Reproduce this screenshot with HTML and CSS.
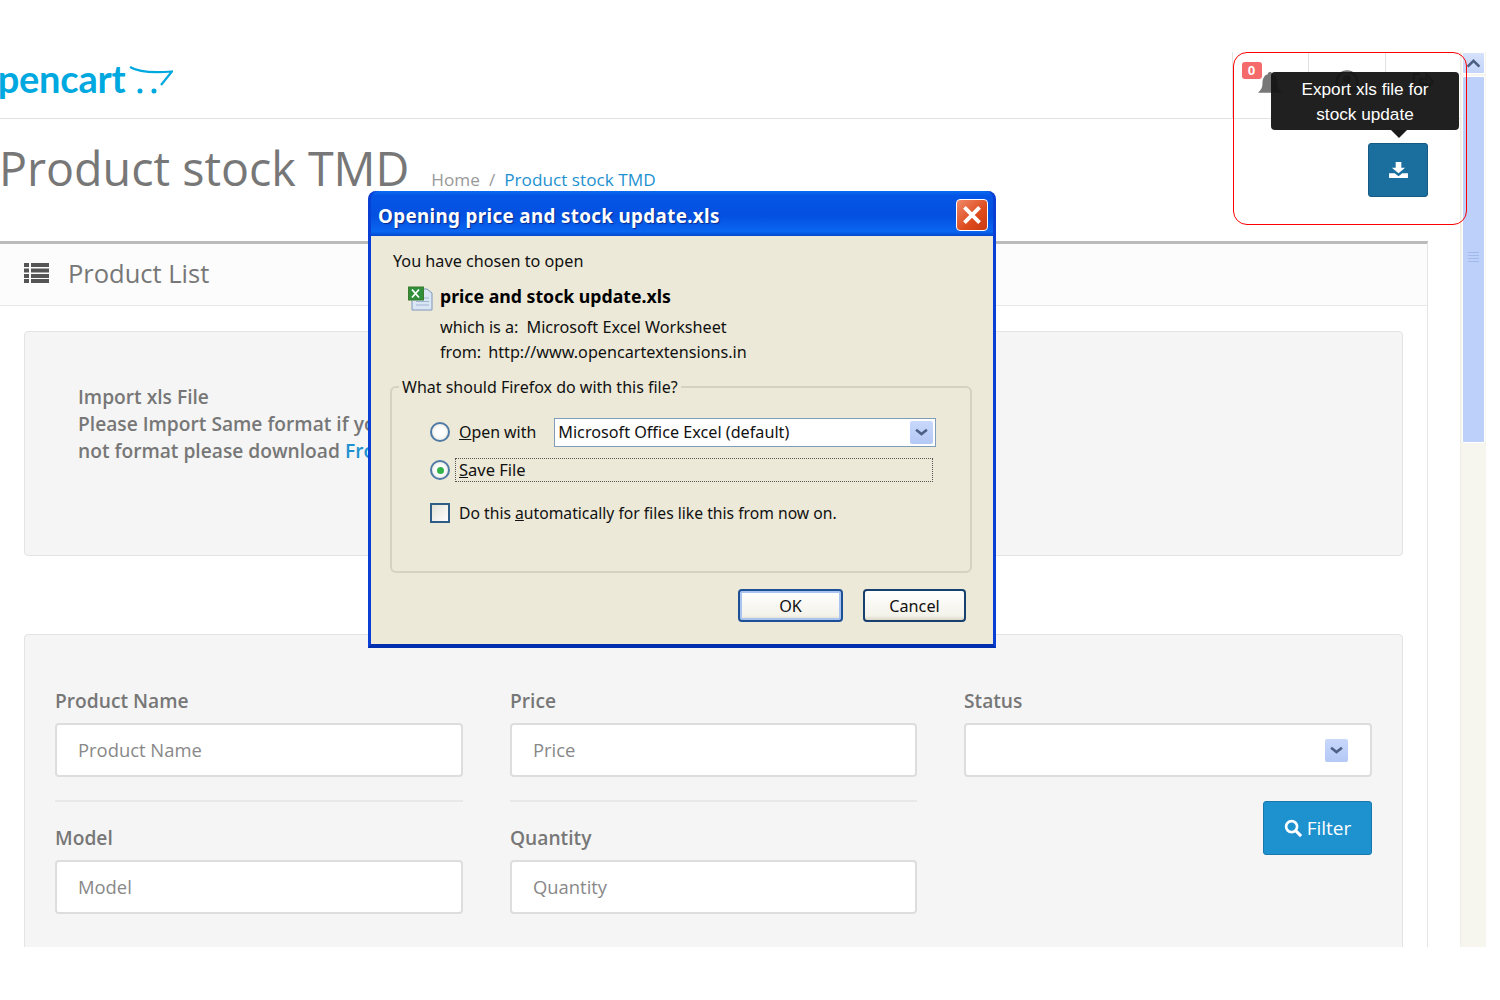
FILE: index.html
```html
<!DOCTYPE html>
<html lang="en">
<head>
<meta charset="utf-8">
<title>Product stock TMD</title>
<link rel="stylesheet" href="styles.css">
</head>
<body>
<div class="shot">
  <main class="page">
    <header class="top">
      <div class="logo">
        <span class="logo-text">opencart</span>
        <svg class="logo-cart" viewBox="0 0 44 30" aria-hidden="true">
          <path d="M1 2C11 8 26 8 43 6.500L32 20" fill="none" stroke="#00a8e0" stroke-width="2.200"/>
          <circle cx="11" cy="26" r="2.500" fill="#00a8e0"/>
          <circle cx="25" cy="26" r="2.500" fill="#00a8e0"/>
        </svg>
      </div>
      <nav class="top-nav">
        <div class="top-item"><svg class="bell" viewBox="0 0 24 24"><path d="M12 1c1.500 0 2 1 2 2 4 1 5 5 5 9 0 4 2 6 4 8H1c2-2 4-4 4-8 0-4 1-8 5-9 0-1 .5-2 2-2z" fill="#777"/></svg><span class="count">0</span></div>
        <div class="top-item"><svg class="user" viewBox="0 0 24 24"><circle cx="12" cy="12" r="10.500" fill="none" stroke="#777" stroke-width="2.500"/><circle cx="12" cy="9" r="4" fill="#777"/><path d="M5 19c2-5 12-5 14 0z" fill="#777"/></svg></div>
        <div class="top-item"><svg class="out" viewBox="0 0 24 20"><path d="M9 2H2v16h7M9 7h7V2l7 8-7 8v-5H9z" fill="none" stroke="#777" stroke-width="2.500"/></svg></div>
      </nav>
    </header>

    <div class="title-row">
      <div class="titles">
        <h1>Product stock TMD</h1>
        <ul class="crumbs">
          <li>Home</li>
          <li class="sep">/</li>
          <li class="cur">Product stock TMD</li>
        </ul>
      </div>
      <div class="export">
        <button class="export-btn" type="button" aria-label="Export">
          <svg viewBox="0 0 20 18" class="dl"><path d="M7 0h6v6h4l-7 6-7-6h4zM0 12h6l4 3 4-3h6v5H0z" fill="#fff"/></svg>
        </button>
        <div class="tip">Export xls file for<br>stock update</div>
      </div>
    </div>

    <section class="panel">
      <div class="panel-head">
        <svg class="list-ico" viewBox="0 0 25 20"><path d="M0 0h5v4H0zM7 0h18v4H7zM0 5.500h5v4H0zM7 5.500h18v4H7zM0 11h5v4H0zM7 11h18v4H7zM0 16h5v4H0zM7 16h18v4H7z" fill="#555"/></svg>
        <span>Product List</span>
      </div>
      <div class="panel-body">
        <div class="well import">
          <p>Import xls File<br>Please Import Same format if you have<br>not format please download <a href="#">From Here</a></p>
        </div>
        <div class="well filter">
          <div class="col">
            <label>Product Name</label>
            <div class="input ph">Product Name</div>
            <hr>
            <label>Model</label>
            <div class="input ph">Model</div>
          </div>
          <div class="col">
            <label>Price</label>
            <div class="input ph">Price</div>
            <hr>
            <label>Quantity</label>
            <div class="input ph">Quantity</div>
          </div>
          <div class="col">
            <label>Status</label>
            <div class="input sel"><span class="xp-arrow"><svg viewBox="0 0 12 8"><path d="M1 1.500l5 4 5-4" fill="none" stroke="#4d6185" stroke-width="2.400"/></svg></span></div>
            <button class="filter-btn" type="button">
              <svg viewBox="0 0 20 20"><circle cx="8" cy="8" r="5.800" fill="none" stroke="#fff" stroke-width="2.800"/><path d="M12.500 12.500l5.500 5.500" stroke="#fff" stroke-width="3.200"/></svg>
              Filter
            </button>
          </div>
        </div>
      </div>
    </section>
  </main>

  <div class="scrollbar">
    <div class="sb-up"><svg viewBox="0 0 14 10"><path d="M1.500 8L7 2.500 12.500 8" fill="none" stroke="#4d6185" stroke-width="2.400"/></svg></div>
    <div class="sb-thumb"><span class="grip"></span></div>
  </div>

  <div class="callout"></div>

  <div class="dialog">
    <div class="dlg-title">
      <span>Opening price and stock update.xls</span>
      <span class="dlg-close"><svg viewBox="0 0 16 16"><path d="M2.500 2.500l11 11M13.500 2.500l-11 11" stroke="#fff" stroke-width="2.800"/></svg></span>
    </div>
    <div class="dlg-body">
      <p class="chosen">You have chosen to open</p>
      <div class="file">
        <svg class="xls" viewBox="0 0 25 25">
          <path d="M4 3h15l5 4v17H4z" fill="#dbe6f5" stroke="#7f97bb"/>
          <path d="M8 12h13M8 15.500h13M8 19h13" stroke="#9fb4d2"/>
          <rect x="0.500" y="1" width="15" height="13" fill="#2f8f3a" stroke="#3d7a2c"/>
          <path d="M4 3.500l7 8M11 3.500l-7 8" stroke="#fff" stroke-width="1.800"/>
        </svg>
        <div class="file-info">
          <strong>price and stock update.xls</strong>
          <div class="meta meta-a">which is a:<span class="m1">Microsoft Excel Worksheet</span></div>
          <div class="meta">from:<span class="m2">http://www.opencartextensions.in</span></div>
        </div>
      </div>
      <fieldset class="choice">
        <legend>What should Firefox do with this file?</legend>
        <div class="opt opt-open">
          <span class="radio"></span>
          <span class="opt-label"><u>O</u>pen with</span>
          <div class="xp-select">Microsoft Office Excel (default)<span class="xp-arrow"><svg viewBox="0 0 12 8"><path d="M1 1.500l5 4 5-4" fill="none" stroke="#4d6185" stroke-width="2.400"/></svg></span></div>
        </div>
        <div class="opt opt-save">
          <span class="radio on"><i></i></span>
          <span class="focus"><u>S</u>ave File</span>
        </div>
        <div class="opt opt-auto">
          <span class="check"></span>
          <span class="opt-label">Do this <u>a</u>utomatically for files like this from now on.</span>
        </div>
      </fieldset>
      <div class="dlg-btns">
        <button class="xp-btn def" type="button">OK</button>
        <button class="xp-btn" type="button">Cancel</button>
      </div>
    </div>
  </div>
</div>
</body>
</html>
```
FILE: styles.css
```css
* { box-sizing: border-box; }
html, body { margin: 0; padding: 0; background: #fff; }
body { font-family: "Open Sans", "Noto Sans", sans-serif; color: #666; }

.shot { position: relative; display: flex; width: 1500px; height: 947px; overflow: hidden; }
.page { width: 1460px; flex: none; }

.top { display: flex; justify-content: space-between; height: 119px; padding-top: 52px; border-bottom: 1px solid #e2e2e2; }
.logo { display: flex; align-items: flex-start; margin-top: 4px; margin-left: -24px; }
.logo-text { font-family: Lato, "Open Sans", sans-serif; font-weight: 700; font-size: 38px; line-height: 44px; color: #00a8e0; letter-spacing: -.2px; }
.logo-cart { width: 44px; height: 30px; margin: 9px 0 0 4px; }
.top-nav { display: flex; margin-right: -1px; }
.top-item { position: relative; width: 76.500px; border-left: 1px solid #e2e2e2; }
.bell { position: absolute; left: 24px; top: 19px; width: 26px; height: 26px; }
.user { position: absolute; left: 26px; top: 18px; width: 24px; height: 24px; }
.out { position: absolute; left: 26px; top: 20px; width: 22px; height: 19px; }
.count { position: absolute; left: 9px; top: 10px; width: 20px; height: 17px; border-radius: 3px; background: #f56b6b; color: #fff; font: 700 13.500px/17px "Liberation Sans", sans-serif; text-align: center; }

.title-row { display: flex; justify-content: space-between; height: 122px; padding-right: 32px; }
.titles { display: flex; align-items: flex-start; }
h1 { margin: 19px 0 0 -1px; font-size: 46.600px; line-height: 60px; font-weight: 400; color: #777; white-space: nowrap; }
.crumbs { display: flex; gap: 9px; list-style: none; margin: 49px 0 0 22px; padding: 0; font-size: 17.200px; line-height: 24px; color: #999; }
.crumbs .cur { color: #1e91cf; }
.export { position: relative; padding-top: 24px; }
.export-btn { display: flex; align-items: center; justify-content: center; width: 60px; height: 54px; padding: 0; background: #1b6f9f; border: 1px solid #155a83; border-radius: 3px; }
.dl { width: 19px; height: 17px; }
.tip { position: absolute; right: -31px; top: -47px; width: 188px; height: 58px; padding-top: 5px; background: rgba(20, 20, 20, .95); border-radius: 4px; color: #fff; font: 17.200px/25px "Liberation Sans", sans-serif; text-align: center; }
.tip::after { content: ""; position: absolute; left: 120px; bottom: -8px; border: 8px solid transparent; border-bottom: 0; border-top-color: #1a1a1a; }

.panel { width: 1428px; border-top: 3px solid #bbb; border-right: 1px solid #e4e4e4; }
.panel-head { display: flex; align-items: center; gap: 19px; height: 62px; padding: 0 0 3px 24px; background: #fcfcfc; border-bottom: 1px solid #e8e8e8; font-size: 25.500px; color: #777; }
.list-ico { width: 25px; height: 20px; }
.panel-body { padding: 25px 24px 0; }
.well { background: #f5f5f5; border: 1px solid #e3e3e3; border-radius: 4px; }
.import { height: 225px; padding: 51px 0 0 53px; }
.import p { margin: 0; font-size: 19.200px; line-height: 27px; font-weight: 600; color: #777; }
.import a { color: #1e91cf; text-decoration: none; }
.filter { display: grid; grid-template-columns: 408px 407px 408px; column-gap: 47px; margin-top: 78px; height: 500px; padding: 53px 0 0 30px; }
label { display: block; font-size: 19.200px; line-height: 26px; font-weight: 600; color: #777; margin-bottom: 9px; }
.input { height: 54px; padding-left: 21px; background: #fff; border: 2px solid #ddd; border-radius: 4px; font-size: 18.400px; line-height: 50px; color: #888; }
.sel { display: flex; align-items: center; justify-content: flex-end; padding-right: 22px; }
hr { height: 2px; margin: 23px 0 23px; border: 0; background: #e8e8e8; }
.filter-btn { display: flex; align-items: center; justify-content: center; gap: 4px; width: 109px; height: 54px; margin: 24px 0 0 auto; padding: 0; background: #1e91cf; border: 1px solid #1978ab; border-radius: 3px; color: #fff; font: 400 19px "Open Sans", sans-serif; }
.filter-btn svg { width: 19px; height: 19px; }

.xp-arrow { display: flex; align-items: center; justify-content: center; flex: none; width: 23px; height: 23px; background: linear-gradient(#c8d8fb, #b4c8f5); border-radius: 2px; }
.xp-arrow svg { width: 13px; height: 9px; }

.scrollbar { width: 26px; margin-top: 52px; padding: 0 1px; background: #f6f5ee; border-left: 1px solid #eeede5; }
.sb-up { display: flex; align-items: center; justify-content: center; height: 22px; background: linear-gradient(#d6e2fc, #c3d4f9); border: 1px solid #fff; border-radius: 2px; }
.sb-up svg { width: 15px; height: 11px; }
.sb-thumb { display: flex; align-items: center; justify-content: center; height: 367px; margin-top: 2px; background: #bcd0f9; border: 1px solid #fff; border-radius: 2px; }
.grip { width: 11px; height: 11px; margin-top: -4px; background: repeating-linear-gradient(#a2b9ec 0 1px, transparent 1px 3px); }

.callout { position: absolute; left: 1233px; top: 52px; width: 234px; height: 173px; border: 1.500px solid #f00; border-radius: 14px; }

.dialog { position: absolute; left: 368px; top: 191px; width: 628px; height: 457px; background: #0a3fd6; border-radius: 8px 8px 0 0; border: 3px solid #0a3fd6; border-top: 0; border-bottom-width: 4px; border-bottom-color: #0030b0; font-family: "Noto Sans", sans-serif; color: #111; }
.dlg-title { display: flex; align-items: center; justify-content: space-between; height: 45px; padding: 3px 5px 0 7px; background: linear-gradient(#0a6cf0 0, #0556e6 10%, #0450e0 55%, #0a66f0 90%, #0448d0 100%); border-radius: 8px 8px 0 0; color: #fff; font-weight: 700; font-size: 18.800px; letter-spacing: .35px; text-shadow: 1px 1px 1px #0a2a90; }
.dlg-title > span:first-child { margin-top: 2px; }
.dlg-close { display: flex; align-items: center; justify-content: center; width: 32px; height: 32px; background: linear-gradient(135deg, #ef8a6a, #dd4a1c 60%, #c93a12); border: 1px solid #fff; border-radius: 4px; }
.dlg-close svg { width: 22px; height: 22px; }
.dlg-body { height: 408px; padding: 13px 21px 0 22px; background: #ece9d8; font-size: 16.200px; line-height: 24px; }
.chosen { margin: 0; }
.file { display: flex; margin: 11px 0 0 15px; }
.xls { flex: none; width: 25px; height: 25px; margin-top: 2px; }
.file-info { margin-left: 7px; }
.file-info strong { display: block; font-size: 17.700px; line-height: 24px; font-weight: 700; color: #000; }
.meta { margin-top: 5px; line-height: 20px; }
.meta-a { margin-top: 9px; }
.m1 { margin-left: 8px; }
.m2 { margin-left: 7px; }

.choice { position: relative; height: 198px; margin: 13px 0 0 -3px; padding: 0; border: 2px solid #d5d2bf; border-radius: 6px; }
.choice legend { margin-left: 7px; padding: 0 3px; font-size: 16px; line-height: 24px; }
.opt { display: flex; align-items: center; margin-left: 38px; }
.opt-open { height: 28px; margin-top: 19px; }
.opt-save { height: 24px; margin-top: 12px; }
.opt-auto { height: 20px; margin-top: 21px; }
.opt-label { margin-left: 9px; font-size: 15.900px; white-space: nowrap; }
.opt-auto .opt-label { font-size: 15.700px; }
.radio { display: flex; align-items: center; justify-content: center; flex: none; width: 20px; height: 20px; border: 2px solid #4f7ba5; border-radius: 50%; background: radial-gradient(#fff 40%, #dcdcd3); }
.radio i { width: 7px; height: 7px; border-radius: 50%; background: #32b44a; }
.xp-select { display: flex; align-items: center; justify-content: space-between; width: 382px; height: 29px; margin-left: 18px; padding: 0 2px 0 3px; background: #fff; border: 1px solid #7f9db9; }
.focus { width: 478px; height: 24px; margin-left: 5px; padding-left: 3px; border: 1px dotted #555; font-size: 16.500px; line-height: 22px; }
.check { flex: none; width: 20px; height: 20px; border: 2px solid #2f5d86; background: linear-gradient(135deg, #e4e2d6, #fff); }
.dlg-btns { display: flex; justify-content: flex-end; gap: 20px; margin-top: 16px; padding-right: 6px; }
.xp-btn { width: 103px; height: 33px; padding: 0; background: linear-gradient(#fff, #f3f2ea 85%, #dcd8c8); border: 2px solid #17406e; border-radius: 4px; font: 16.200px "Noto Sans", sans-serif; color: #111; }
.xp-btn.def { width: 105px; box-shadow: inset 0 0 0 2px #a9c4ee; border-color: #1c4f96; }
```
